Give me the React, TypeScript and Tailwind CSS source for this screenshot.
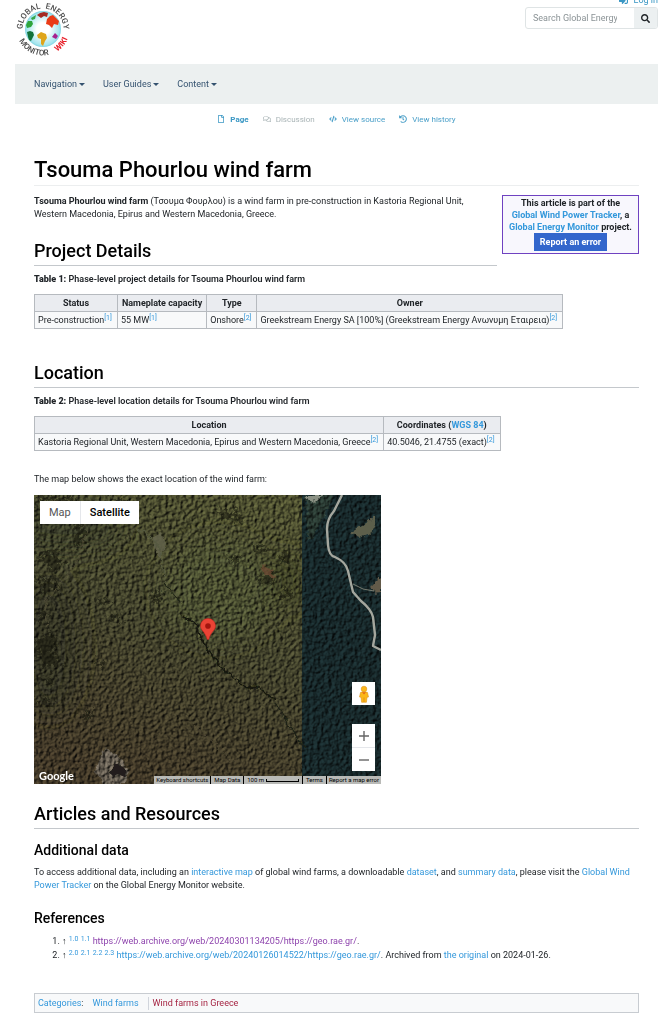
import type { ReactNode } from "react";
import { FaCode, FaHistory, FaRegComments, FaRegFile, FaSearch, FaSignInAlt } from "react-icons/fa";
import clsx from "clsx";

const navMenus = ["Navigation", "User Guides", "Content"];

const pageTabs = [
  { label: "Page", icon: FaRegFile, className: "font-bold text-[#3a97c4]" },
  { label: "Discussion", icon: FaRegComments, className: "text-[#a9b4b6]" },
  { label: "View source", icon: FaCode, className: "text-[#4a9fc8]" },
  { label: "View history", icon: FaHistory, className: "text-[#4a9fc8]" },
];

function WikiLink({ children, className }: { children: ReactNode; className?: string }) {
  return (
    <a href="#" className={clsx("hover:underline", className || "text-[#3498db]")}>
      {children}
    </a>
  );
}

function Ref({ children }: { children: ReactNode }) {
  return (
    <sup className="text-[7px] leading-none">
      <WikiLink>{children}</WikiLink>
    </sup>
  );
}

function SectionHeading({ children }: { children: ReactNode }) {
  return (
    <h2 className="border-b border-[#c4c8cc] pb-[3px] text-[18px] font-medium leading-[22px] text-black">
      {children}
    </h2>
  );
}

function Th({ children }: { children: ReactNode }) {
  return (
    <th className="border border-[#b6babf] bg-[#eaecf0] px-1 text-center font-bold leading-[16px]">
      {children}
    </th>
  );
}

function Td({ children }: { children: ReactNode }) {
  return <td className="border border-[#b6babf] bg-[#f8f9fa] pl-[3px] pr-[5px] leading-[16px]">{children}</td>;
}

function Logo() {
  return (
    <svg viewBox="0 0 56 56" className="h-14 w-14" role="img" aria-label="Global Energy Monitor Wiki">
      <defs>
        <path id="arc-top" d="M7.5 28 A20.5 20.5 0 0 1 48.5 28" />
        <path id="arc-bottom" d="M1.5 28 A26.5 26.5 0 0 0 54.5 28" />
        <radialGradient id="sea">
          <stop offset="0.35" stopColor="#ffffff" />
          <stop offset="0.9" stopColor="#a5e6ee" />
          <stop offset="1" stopColor="#7fd4e2" />
        </radialGradient>
      </defs>
      <circle cx="28" cy="28" r="18" fill="url(#sea)" />
      <path d="M11 24 L13 20 L17 20 L18 23 L16 26 L12 27 Z" fill="#2fa53c" />
      <path d="M16 17 L21 14 L20 18 L17 19 Z" fill="#35a54a" />
      <path d="M22 14 L25 12 L29 11 L33 12 L32 16 L29 15 L26 17 Z" fill="#a52a22" />
      <path d="M32 18 L35 15 L38 14 L41 17 L44 20 L43 24 L39 23 L37 27 L34 24 L31 23 Z" fill="#ea3b16" />
      <path d="M12 31 L15 30 L18 31 L19 34 L16 40 L14 39 L13 36 Z" fill="#12723a" />
      <path d="M22 34 L26 31 L31 33 L32 37 L30 40 L28 45 L26 43 L26 38 L23 37 Z" fill="#dfa51a" />
      <path d="M37 36 L40 32 L43 35 L41 38 Z" fill="#a7218f" />
      <g fontFamily="Roboto, sans-serif" fontSize="8" fontWeight="500" fill="#4a4a4a" textAnchor="middle">
        <text><textPath href="#arc-top" startOffset="23%">GLOBAL</textPath></text>
        <text><textPath href="#arc-top" startOffset="77%">ENERGY</textPath></text>
        <text><textPath href="#arc-bottom" startOffset="36%">MONITOR</textPath></text>
        <text fill="#e8212b" fontWeight="700"><textPath href="#arc-bottom" startOffset="78%">WIKI</textPath></text>
      </g>
    </svg>
  );
}

function SatelliteImage() {
  return (
    <svg viewBox="0 0 347 289" preserveAspectRatio="xMidYMid slice" className="h-full w-full" aria-hidden="true">
      <defs>
        <filter id="canopy" x="0" y="0" width="100%" height="100%" colorInterpolationFilters="sRGB">
          <feTurbulence type="fractalNoise" baseFrequency="0.27" numOctaves="5" seed="21" />
          <feDiffuseLighting surfaceScale="2" diffuseConstant="0.75" lightingColor="#ffffff">
            <feDistantLight azimuth="215" elevation="45" />
          </feDiffuseLighting>
        </filter>
        <filter id="rough" x="-5%" y="-5%" width="110%" height="110%">
          <feTurbulence type="fractalNoise" baseFrequency="0.15" numOctaves="3" seed="3" />
          <feDisplacementMap in="SourceGraphic" scale="8" xChannelSelector="R" yChannelSelector="G" />
          <feGaussianBlur stdDeviation="0.4" />
        </filter>
        <filter id="clumps" x="-5%" y="-5%" width="110%" height="110%">
          <feTurbulence type="fractalNoise" baseFrequency="0.2" numOctaves="3" seed="5" />
          <feDisplacementMap in="SourceGraphic" scale="22" xChannelSelector="R" yChannelSelector="G" />
          <feGaussianBlur stdDeviation="0.6" />
        </filter>
        <filter id="soft" x="-30%" y="-30%" width="160%" height="160%">
          <feGaussianBlur stdDeviation="12" />
        </filter>
        <linearGradient id="ground" x1="0.7" y1="0" x2="0.3" y2="1">
          <stop offset="0" stopColor="#4b4d2e" />
          <stop offset="0.5" stopColor="#40402a" />
          <stop offset="1" stopColor="#3e3525" />
        </linearGradient>
      </defs>
      <rect width="347" height="289" fill="url(#ground)" />
      <g filter="url(#soft)">
        <ellipse cx="15" cy="150" rx="30" ry="70" fill="#303323" />
        <ellipse cx="30" cy="30" rx="60" ry="25" fill="#373a26" />
        <ellipse cx="245" cy="85" rx="30" ry="25" fill="#3a3c24" />
        <ellipse cx="185" cy="95" rx="55" ry="50" fill="#474b2e" />
      </g>
      <rect x="268" width="79" height="289" fill="#162628" />
      <g filter="url(#rough)">
        <path d="M272 0 H300 L290 22 L280 40 L273 45 Z" fill="#26352e" />
        <path d="M66 262 L73 253 L82 260 L94 275 L92 289 L70 289 L62 276 Z" fill="#5f594d" />
      </g>
      <rect width="347" height="289" filter="url(#canopy)" className="mix-blend-overlay" />
      <g filter="url(#clumps)" fill="#15190f" opacity="0.5">
        <path d="M2 145 L14 138 L25 149 L17 157 L28 168 L12 172 L3 160 Z" />
        <path d="M6 60 L22 55 L30 69 L18 77 Z M4 82 L18 84 L27 94 L9 97 Z" />
        <path d="M41 30 L50 22 L50 45 L42 55 Z M61 103 L77 107 L68 112 Z M75 121 L88 119 L82 128 Z" />
        <path d="M60 166 L72 164 L70 173 Z M47 219 L62 214 L57 224 Z M114 107 L129 94 L125 107 Z" />
        <path d="M215 52 L226 49 L235 54 L222 57 Z M242 62 L254 58 L258 65 L251 67 Z" />
        <path d="M192 64 L208 62 L202 70 Z M222 83 L241 79 L237 91 Z M248 91 L258 97 L252 103 Z" />
        <path d="M185 17 L202 14 L208 27 L190 24 Z M4 2 L45 2 L30 8 L9 9 Z M75 4 L98 5 L83 10 Z" />
        <path d="M3 180 L20 184 L14 192 Z M6 112 L16 120 L5 126 Z M8 200 L20 206 L10 212 Z" />
      </g>
      <g filter="url(#rough)">
        <path d="M272 1 H290 L277 8 Z" fill="#8b9184" />
        <path d="M317 37 L326 31 L333 27 L342 20 L342 30 L338 37 L325 43 Z" fill="#5d5e4b" />
        <path d="M338 92 L348 82 V97 L340 98 Z" fill="#625a49" />
        <path d="M119 44 L127 36 L131 48 L127 62 L121 58 Z" fill="#61634d" opacity="0.8" />
        <path d="M228 70 L238 76 L240 83 L231 80 Z" fill="#6b4a32" opacity="0.8" />
        <path d="M81 268 L89 272 L92 282 L84 279 L78 286 L76 278 Z" fill="#211f1b" />
        <path d="M104 34 L118 43 L127 57 L129 76 L132 88" stroke="#565a40" strokeWidth="1.2" fill="none" />
        <path d="M131 88 L146 107" stroke="#202416" strokeWidth="1.3" fill="none" />
        <path d="M147 119 L163 131 L167 143 L177 160 L193 177 L211 192 L225 193 L240 205" stroke="#14170e" strokeWidth="2" fill="none" />
        <path d="M242 207 L250 224 L272 255" stroke="#1f2317" strokeWidth="1.3" fill="none" />
        <path d="M53 35 L43 67 L25 91 L11 108 L14 135" stroke="#4f4b35" strokeWidth="1" fill="none" />
        <path d="M160 230 L181 249 L202 268" stroke="#4e4733" strokeWidth="1" fill="none" />
      </g>
      <path d="M308 0 L300 16 Q293 24 293 34 L294 50 Q295 61 301 62 Q312 67 314 76 L319 97 L327 106 Q337 114 339 122 L341 140 L339 151 L347 155" stroke="#a5a79e" strokeWidth="2.4" strokeLinejoin="round" fill="none" />
      <path d="M319 89 L329 94 L340 96" stroke="#777b70" strokeWidth="1" fill="none" />
    </svg>
  );
}

function MapView() {
  return (
    <div className="relative h-[289px] w-full max-w-[347px] overflow-hidden">
      <SatelliteImage />
      <div className="absolute left-[6px] top-[6px] flex h-[23px] bg-white text-[11px]">
        <button className="border-r border-gray-200 px-[9px] text-[#565656]">Map</button>
        <button className="px-[9px] font-medium text-black">Satellite</button>
      </div>
      <svg viewBox="0 0 16 22" className="absolute left-[166px] top-[123px] h-[22px] w-4" aria-hidden="true">
        <path d="M8 0.5 C3.8 0.5 0.5 3.8 0.5 8 C0.5 12.5 5.5 14 7 21 Q8 22.5 9 21 C10.5 14 15.5 12.5 15.5 8 C15.5 3.8 12.2 0.5 8 0.5 Z" fill="#ea4335" stroke="#c5221f" strokeWidth="0.5" />
        <circle cx="8" cy="8" r="2.8" fill="#a3150f" />
      </svg>
      <button aria-label="Street View" className="absolute right-[6px] top-[187px] flex size-[23px] items-center justify-center bg-white">
        <svg viewBox="0 0 12 18" className="h-[18px] w-3" aria-hidden="true">
          <path d="M2.5 7.5 Q6 5.5 9.5 7.5 L10.5 12 L9 12.3 L8.4 17.3 H3.6 L3 12.3 L1.5 12 Z" fill="#fbb61a" stroke="#dd9420" strokeWidth="0.6" />
          <path d="M4 7.2 L6 9.5 L8 7.2" fill="#e2661a" />
          <path d="M6 12.5 V17" stroke="#d8860f" strokeWidth="0.7" />
          <circle cx="6" cy="4" r="2.8" fill="#fbb61a" stroke="#dd9420" strokeWidth="0.6" />
        </svg>
      </button>
      <div className="absolute right-[6px] top-[229px] flex w-[23px] flex-col bg-white">
        <button aria-label="Zoom in" className="flex h-[23px] items-center justify-center">
          <svg viewBox="0 0 10 10" className="size-[10px]"><path d="M5 0 V10 M0 5 H10" stroke="#666" strokeWidth="1.4" /></svg>
        </button>
        <button aria-label="Zoom out" className="flex h-6 items-center justify-center border-t border-gray-200">
          <svg viewBox="0 0 10 10" className="size-[10px]"><path d="M0 5 H10" stroke="#666" strokeWidth="1.4" /></svg>
        </button>
      </div>
      <span className="absolute bottom-[1px] left-[5px] font-[Lato,sans-serif] text-[11px] font-bold leading-[14px] text-white">Google</span>
      <div className="absolute bottom-0 right-0 flex h-2 divide-x divide-black bg-[#b9bab7] text-[6px] leading-[8px] text-black">
        <button className="px-[2px]">Keyboard shortcuts</button>
        <button className="px-[3px]">Map Data</button>
        <span className="flex items-center gap-[2px] px-[3px]">
          100 m
          <span className="h-[3px] w-[33px] border-x border-b border-black" />
        </span>
        <a href="#" className="px-[3px]">Terms</a>
        <a href="#" className="px-[2px]">Report a map error</a>
      </div>
    </div>
  );
}

export default function App() {
  return (
    <div className="min-h-screen overflow-hidden bg-white pb-3 pl-[15px] pr-[3px] font-[Roboto,sans-serif] text-[9px] leading-[13px] text-[#212529]">
      <header className="flex h-16 items-start justify-between">
        <a href="#" className="mt-[1px]">
          <Logo />
        </a>
        <div className="-mt-[6px] flex flex-col items-end">
          <a href="#" className="flex h-[13px] items-center gap-[6px] text-[#3a97c4]">
            <FaSignInAlt /> Log in
          </a>
          <form className="flex h-[22px] w-[133px] overflow-hidden rounded-[3px] border border-[#dfe4e5]">
            <input
              type="search"
              aria-label="Search"
              placeholder="Search Global Energy"
              className="min-w-0 flex-1 px-[7px] text-[9px] outline-none placeholder:text-[#8b9396]"
            />
            <button type="button" aria-label="Go" className="flex w-[23px] items-center justify-center bg-[#ecf0f1] text-[#212529]">
              <FaSearch className="size-[9px]" />
            </button>
          </form>
        </div>
      </header>

      <nav className="flex h-10 items-center gap-[18px] bg-[#ecf0f0] px-[19px] text-[#34526f]">
        {navMenus.map((menu) => (
          <button key={menu} className="flex items-center gap-[2px]">
            {menu}
            <span className="border-x-[3px] border-t-[3px] border-x-transparent border-t-current" />
          </button>
        ))}
      </nav>

      <div className="flex h-[30px] items-center justify-center gap-[14px] text-[8px]">
        {pageTabs.map(({ label, icon: Icon, className }) => (
          <a key={label} href="#" className={clsx("flex items-center gap-[5px]", className)}>
            <Icon className="size-[8px]" />
            {label}
          </a>
        ))}
      </div>

      <main className="px-[19px] pt-[22px]">
        <h1 className="border-b border-[#eceeef] pb-[1px] text-[22px] font-medium leading-[28px] text-black">
          Tsouma Phourlou wind farm
        </h1>

        <div className="flex items-start gap-[5px] pt-[9px]">
          <div className="min-w-0 flex-1">
            <p className="pr-5">
              <b>Tsouma Phourlou wind farm</b> (Τσουμα Φουρλου) is a wind farm in pre-construction in Kastoria Regional
              Unit, Western Macedonia, Epirus and Western Macedonia, Greece.
            </p>
            <div className="mt-[19px]">
              <SectionHeading>Project Details</SectionHeading>
            </div>
          </div>
          <aside className="w-[137px] shrink-0 border border-[#6f42c1] bg-[#f8f7fd] pb-[2px] pt-[1px] text-center font-bold leading-[12px]">
            <p>This article is part of the</p>
            <p><WikiLink>Global Wind Power Tracker</WikiLink>, a</p>
            <p><WikiLink>Global Energy Monitor</WikiLink> project.</p>
            <button className="mx-auto block h-[18px] bg-[#3366cc] px-[6px] text-white">Report an error</button>
          </aside>
        </div>

        <p className="mt-[7px] font-semibold">
          <b>Table 1:</b> Phase-level project details for Tsouma Phourlou wind farm
        </p>
        <table className="mt-2 border-collapse whitespace-nowrap">
          <thead>
            <tr>
              <Th>Status</Th>
              <Th>Nameplate capacity</Th>
              <Th>Type</Th>
              <Th>Owner</Th>
            </tr>
          </thead>
          <tbody>
            <tr>
              <Td>Pre-construction<Ref>[1]</Ref></Td>
              <Td>55 MW<Ref>[1]</Ref></Td>
              <Td>Onshore<Ref>[2]</Ref></Td>
              <Td>Greekstream Energy SA [100%] (Greekstream Energy Ανωνυμη Εταιρεια)<Ref>[2]</Ref></Td>
            </tr>
          </tbody>
        </table>

        <div className="mt-[33px]">
          <SectionHeading>Location</SectionHeading>
        </div>
        <p className="mt-[7px] font-semibold">
          <b>Table 2:</b> Phase-level location details for Tsouma Phourlou wind farm
        </p>
        <table className="mt-2 border-collapse whitespace-nowrap">
          <thead>
            <tr>
              <Th>Location</Th>
              <Th>Coordinates (<WikiLink>WGS 84</WikiLink>)</Th>
            </tr>
          </thead>
          <tbody>
            <tr>
              <Td>Kastoria Regional Unit, Western Macedonia, Epirus and Western Macedonia, Greece<Ref>[2]</Ref></Td>
              <Td>40.5046, 21.4755 (exact)<Ref>[2]</Ref></Td>
            </tr>
          </tbody>
        </table>

        <p className="mb-[9px] mt-[22px]">The map below shows the exact location of the wind farm:</p>
        <MapView />

        <div className="mt-[19px]">
          <SectionHeading>Articles and Resources</SectionHeading>
        </div>
        <h3 className="mt-3 text-[14px] font-medium leading-[18px] text-black">Additional data</h3>
        <p className="mt-[7px]">
          To access additional data, including an <WikiLink>interactive map</WikiLink> of global wind farms, a
          downloadable <WikiLink>dataset</WikiLink>, and <WikiLink>summary data</WikiLink>, please visit the{" "}
          <WikiLink>Global Wind Power Tracker</WikiLink> on the Global Energy Monitor website.
        </p>
        <h3 className="mt-[17px] text-[14px] font-medium leading-[18px] text-black">References</h3>
        <ol className="mt-[7px] list-decimal pl-7 leading-[14px]">
          <li>
            <b>↑</b> <Ref>1.0</Ref> <Ref>1.1</Ref>{" "}
            <WikiLink className="text-[#8e44ad]">
              https://web.archive.org/web/20240301134205/https://geo.rae.gr/
            </WikiLink>
            .
          </li>
          <li>
            <b>↑</b> <Ref>2.0</Ref> <Ref>2.1</Ref> <Ref>2.2</Ref> <Ref>2.3</Ref>{" "}
            <WikiLink>https://web.archive.org/web/20240126014522/https://geo.rae.gr/</WikiLink>. Archived from{" "}
            <WikiLink>the original</WikiLink> on 2024-01-26.
          </li>
        </ol>

        <div className="mt-[31px] flex h-5 items-center border border-[#c8ccd1] bg-[#f8f9fa] px-[3px]">
          <span><WikiLink>Categories</WikiLink>:</span>
          <ul className="ml-[9px] flex divide-x divide-gray-300">
            <li className="pr-[9px]"><WikiLink>Wind farms</WikiLink></li>
            <li className="pl-1"><WikiLink className="text-[#a52442]">Wind farms in Greece</WikiLink></li>
          </ul>
        </div>
      </main>
    </div>
  );
}
